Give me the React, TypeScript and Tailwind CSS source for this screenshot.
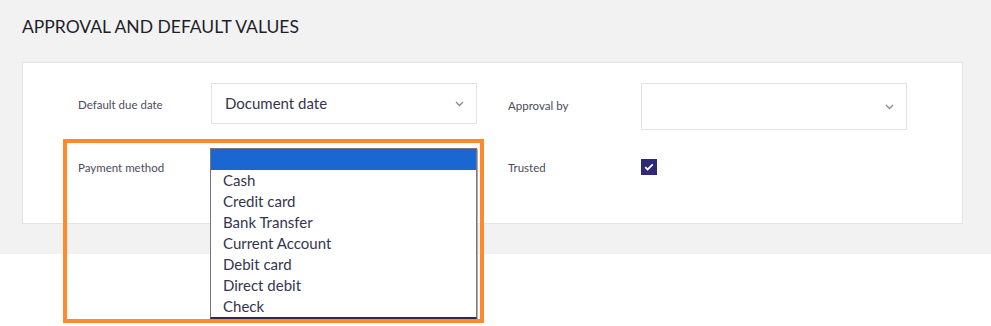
import React from "react";

const PAYMENT_OPTIONS = [
  "Cash",
  "Credit card",
  "Bank Transfer",
  "Current Account",
  "Debit card",
  "Direct debit",
  "Check",
];

function Chevron() {
  return (
    <svg width="9" height="6" viewBox="0 0 9 6" className="text-[#8a8a8a]">
      <path d="M1 1l3.5 3.5L8 1" fill="none" stroke="currentColor" strokeWidth="1.3" />
    </svg>
  );
}

function FieldLabel({ children }: { children: React.ReactNode }) {
  return (
    <div className="w-[133px] shrink-0 text-[11.5px] text-[#4b4b5c]">{children}</div>
  );
}

function SelectBox({ value, height }: { value?: string; height: string }) {
  return (
    <div
      className={`w-[266px] ${height} shrink-0 border border-[#e3e3e3] bg-white flex items-center justify-between pl-[13px] pr-[12px]`}
    >
      <span className="text-[15px] text-[#35354f]">{value}</span>
      <Chevron />
    </div>
  );
}

export default function App() {
  return (
    <div
      className="relative w-full h-[326px] bg-white overflow-hidden"
      style={{ fontFamily: '"Lato", "Liberation Sans", sans-serif' }}
    >
      <section className="bg-[#f2f2f2] px-[22px] pt-[15px] pb-[30px] pr-[28px]">
        <h2 className="text-[17.5px] leading-[24px] text-[#1f1f2a] mb-[23px]">
          APPROVAL AND DEFAULT VALUES
        </h2>
        <div className="bg-white border border-[#e4e4e4] h-[162px] pl-[55px] pt-[20px] flex flex-col gap-[23px]">
          <div className="flex items-start">
            <div className="flex items-center h-[41px]">
              <FieldLabel>
                <span className="relative top-[1px]">Default due date</span>
              </FieldLabel>
              <SelectBox value="Document date" height="h-[41px]" />
            </div>
            <div className="w-[31px] shrink-0" />
            <div className="flex items-center h-[47px]">
              <FieldLabel>
                <span className="relative -top-[1px]">Approval by</span>
              </FieldLabel>
              <SelectBox height="h-[47px]" />
            </div>
          </div>
          <div className="flex items-center h-[38px] -mt-[5px]">
            <FieldLabel>
              <span className="relative top-[1px]">Payment method</span>
            </FieldLabel>
            <div className="w-[266px] h-[38px] shrink-0" />
            <div className="w-[31px] shrink-0" />
            <FieldLabel>
              <span className="relative top-[1px]">Trusted</span>
            </FieldLabel>
            <div className="w-[16px] h-[16px] bg-[#2f2a77] flex items-center justify-center">
              <svg width="10" height="8" viewBox="0 0 10 8">
                <path d="M1.2 4.2l2.4 2.3L8.8 1.3" fill="none" stroke="white" strokeWidth="1.8" />
              </svg>
            </div>
          </div>
        </div>
      </section>

      {/* open dropdown list */}
      <ul className="absolute left-[210px] top-[148px] w-[267px] bg-white border border-[#767676] border-b-[#2b2b55] border-b-2 text-[15px] leading-[21px] text-[#35354f] shadow-[1px_1px_0_#b0b0b0]">
        <li className="h-[21px] bg-[#1a67d2]" />
        {PAYMENT_OPTIONS.map((opt) => (
          <li key={opt} className="h-[21px] pl-[12px]">
            {opt}
          </li>
        ))}
      </ul>

      {/* highlight frame */}
      <div className="absolute left-[63px] top-[139px] w-[421px] h-[184px] border-4 border-[#ff8a2e] pointer-events-none" />
    </div>
  );
}
